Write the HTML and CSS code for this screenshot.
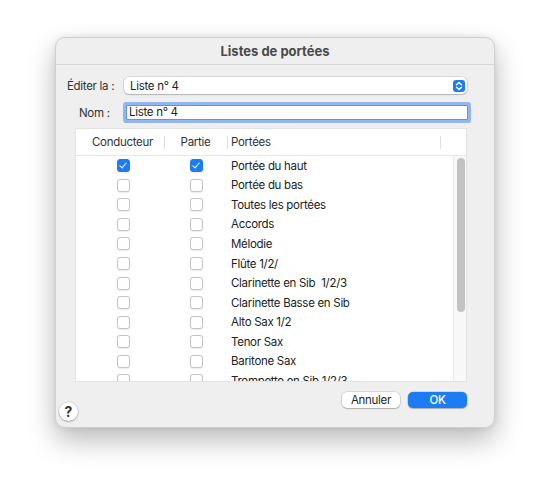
FILE: index.html
```html
<!DOCTYPE html>
<html lang="fr">
<head>
<meta charset="utf-8">
<title>Listes de portées</title>
<link rel="stylesheet" href="styles.css">
</head>
<body>
<div class="window">
  <div class="titlebar">Listes de portées</div>
  <div class="content">
    <div class="row row-edit">
      <span class="label">Éditer la :</span>
      <div class="popup">
        <span>Liste n° 4</span>
        <span class="stepper">
          <svg width="12" height="12" viewBox="0 0 12 12"><path d="M3.5 4.8 L6 2.6 L8.5 4.8 M3.5 7.2 L6 9.4 L8.5 7.2" fill="none" stroke="#fff" stroke-width="1.4" stroke-linecap="round" stroke-linejoin="round"/></svg>
        </span>
      </div>
    </div>
    <div class="row row-name">
      <span class="label">Nom :</span>
      <div class="field">Liste n° 4</div>
    </div>
    <div class="table">
      <div class="thead">
        <div class="th c1">Conducteur</div>
        <div class="th c2">Partie</div>
        <div class="th c3">Portées</div>
        <div class="th c4"></div>
      </div>
      <div class="tbody">
        <div class="rows">
          <div class="tr"><div class="c1"><span class="cb on"></span></div><div class="c2"><span class="cb on"></span></div><div class="c3">Portée du haut</div></div>
          <div class="tr"><div class="c1"><span class="cb"></span></div><div class="c2"><span class="cb"></span></div><div class="c3">Portée du bas</div></div>
          <div class="tr"><div class="c1"><span class="cb"></span></div><div class="c2"><span class="cb"></span></div><div class="c3">Toutes les portées</div></div>
          <div class="tr"><div class="c1"><span class="cb"></span></div><div class="c2"><span class="cb"></span></div><div class="c3">Accords</div></div>
          <div class="tr"><div class="c1"><span class="cb"></span></div><div class="c2"><span class="cb"></span></div><div class="c3">Mélodie</div></div>
          <div class="tr"><div class="c1"><span class="cb"></span></div><div class="c2"><span class="cb"></span></div><div class="c3">Flûte 1/2/</div></div>
          <div class="tr"><div class="c1"><span class="cb"></span></div><div class="c2"><span class="cb"></span></div><div class="c3">Clarinette en Sib&nbsp; 1/2/3</div></div>
          <div class="tr"><div class="c1"><span class="cb"></span></div><div class="c2"><span class="cb"></span></div><div class="c3">Clarinette Basse en Sib</div></div>
          <div class="tr"><div class="c1"><span class="cb"></span></div><div class="c2"><span class="cb"></span></div><div class="c3">Alto Sax 1/2</div></div>
          <div class="tr"><div class="c1"><span class="cb"></span></div><div class="c2"><span class="cb"></span></div><div class="c3">Tenor Sax</div></div>
          <div class="tr"><div class="c1"><span class="cb"></span></div><div class="c2"><span class="cb"></span></div><div class="c3">Baritone Sax</div></div>
          <div class="tr"><div class="c1"><span class="cb"></span></div><div class="c2"><span class="cb"></span></div><div class="c3">Trompette en Sib 1/2/3</div></div>
        </div>
        <div class="scrollbar"><div class="thumb"></div></div>
      </div>
    </div>
    <div class="footer">
      <span class="help">?</span>
      <div class="buttons">
        <span class="btn">Annuler</span>
        <span class="btn primary">OK</span>
      </div>
    </div>
  </div>
</div>
</body>
</html>
```

FILE: styles.css
```css
html, body {
  margin: 0;
  padding: 0;
  background: #ffffff;
}
body {
  width: 550px;
  height: 500px;
  overflow: hidden;
  font-family: Inter, "Noto Sans", sans-serif;
  font-size: 11.5px;
  letter-spacing: -0.3px;
  color: #222222;
}
.window {
  margin: 37px 0 0 55px;
  width: 440px;
  height: 391px;
  box-sizing: border-box;
  background: #efefef;
  border-radius: 10px;
  border: 1px solid #cfcfcf;
  box-shadow: 0 12px 28px rgba(0,0,0,0.28), 0 0 6px rgba(0,0,0,0.08);
  display: flex;
  flex-direction: column;
  overflow: hidden;
}
.titlebar {
  height: 26px;
  border-bottom: 1px solid #d8d8d8;
  display: flex;
  align-items: center;
  justify-content: center;
  font-weight: 700;
  font-size: 13px;
  letter-spacing: 0;
  color: #4a4a4a;
  flex: none;
}
.content {
  flex: 1;
  display: flex;
  flex-direction: column;
  padding: 12px 27px 0 11px;
}
.row {
  display: flex;
  align-items: center;
}
.label {
  color: #333;
  white-space: nowrap;
}
.row-edit {
  height: 17px;
}
.row-edit .label { width: 49px; margin-right: 8px; }
.popup {
  flex: 1;
  height: 17px;
  background: #fff;
  border-radius: 5px;
  box-shadow: 0 0 0 0.5px rgba(0,0,0,0.18), 0 1px 1.5px rgba(0,0,0,0.18);
  display: flex;
  align-items: center;
  justify-content: space-between;
  padding: 0 2px 0 6px;
}
.stepper {
  width: 12px;
  height: 12px;
  border-radius: 3px;
  background: #1b7cf4;
  display: flex;
}
.row-name {
  margin-top: 10px;
  margin-left: 12px;
  height: 17px;
}
.row-name .label { width: 29px; margin-right: 15px; }
.field {
  flex: 1;
  margin-left: 3px;
  margin-right: -0.5px;
  height: 13px;
  background: #fff;
  border: 1px solid #5f93e8;
  box-shadow: 0 0 0 3px rgba(110,158,238,0.7);
  border-radius: 1px;
  padding: 0 2px;
  display: flex;
  align-items: center;
  line-height: 13px;
}
.table {
  margin: 7px 0 0 8px;
  height: 254px;
  background: #fff;
  border: 1px solid #e3e3e3;
  box-sizing: border-box;
  display: flex;
  flex-direction: column;
  overflow: hidden;
}
.thead {
  height: 26px;
  flex: none;
  display: flex;
  border-bottom: 1px solid #e6e6e6;
}
.th {
  display: flex;
  align-items: center;
  position: relative;
  color: #333;
}
.th + .th::before {
  content: "";
  position: absolute;
  left: 0;
  top: 7px;
  bottom: 6px;
  width: 1px;
  background: #e0e0e0;
}
.c1 { width: 88px; justify-content: center; display: flex; }
.c2 { width: 63px; justify-content: center; display: flex; }
.c3 { flex: 1; padding-left: 4px; display: flex; }
.c4 { width: 26px; }
.th.c1 { padding-left: 5px; box-sizing: border-box; }
.tbody {
  flex: 1;
  display: flex;
  overflow: hidden;
}
.rows {
  flex: 1;
  overflow: hidden;
}
.tr {
  height: 19.55px;
  display: flex;
  align-items: center;
  color: #222;
}
.tr .c1 { padding-left: 6px; box-sizing: border-box; }
.tr .c2 { padding-left: 1px; box-sizing: border-box; }
.tr .c3 { padding-left: 4px; }
.cb {
  width: 11px;
  height: 11px;
  border: 0.5px solid #c4c4c4;
  border-radius: 3px;
  background: #fff;
  box-shadow: 0 0.5px 1px rgba(0,0,0,0.08);
  display: block;
  position: relative;
}
.cb.on {
  background: #1b7cf4;
  border-color: #1b7cf4;
}
.cb.on::after {
  content: "";
  position: absolute;
  left: 3.5px;
  top: 1px;
  width: 3px;
  height: 6px;
  border: solid #fff;
  border-width: 0 1.6px 1.6px 0;
  transform: rotate(40deg);
}
.scrollbar {
  width: 13px;
  flex: none;
  background: #f8f8f8;
  border-left: 1px solid #e9e9e9;
  box-sizing: border-box;
  padding: 2px 2px 0 3px;
}
.thumb {
  height: 154px;
  width: 8px;
  border-radius: 4px;
  background: #c2c2c2;
}
.footer {
  margin-left: -8px;
  margin-top: 10px;
  display: flex;
  justify-content: space-between;
  align-items: flex-start;
}
.help {
  margin-top: 10px;
  width: 19px;
  height: 19px;
  border-radius: 50%;
  background: #fff;
  box-shadow: 0 0 0 0.5px rgba(0,0,0,0.15), 0 1px 2px rgba(0,0,0,0.25);
  display: flex;
  align-items: center;
  justify-content: center;
  font-weight: 700;
  font-size: 14px;
  letter-spacing: 0;
  color: #333;
}
.buttons {
  display: flex;
  gap: 8px;
}
.btn {
  height: 16px;
  width: 58px;
  border-radius: 5px;
  background: #fff;
  box-shadow: 0 0 0 0.5px rgba(0,0,0,0.18), 0 1px 1.5px rgba(0,0,0,0.2);
  display: flex;
  align-items: center;
  justify-content: center;
  color: #262626;
}
.btn.primary {
  width: 59px;
  background: #1b7cf4;
  color: #fff;
  font-weight: 500;
}
```
